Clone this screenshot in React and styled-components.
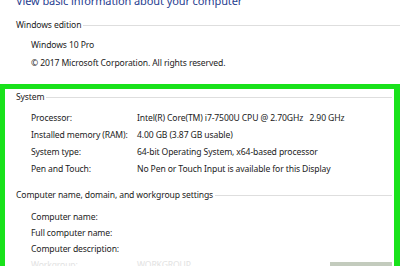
import React from 'react';
import styled, { createGlobalStyle } from 'styled-components';

const GlobalStyle = createGlobalStyle`
  html, body {
    margin: 0;
    padding: 0;
    background: #ffffff;
  }
`;

const Page = styled.div`
  width: 400px;
  height: 266px;
  overflow: hidden;
  background: #ffffff;
  font-family: "Noto Sans", "Open Sans", sans-serif;
  color: #1b1b1b;
  font-size: 8.6px;
  letter-spacing: -0.12px;
`;

const Title = styled.div`
  margin-top: -4px;
  padding-left: 16px;
  font-size: 11px;
  line-height: 10px;
  letter-spacing: -0.1px;
  color: #1f3d8f;
  white-space: nowrap;
`;

const Section = styled.div`
  padding-top: ${p => p.$top || 0}px;
`;

const SectionHeader = styled.div`
  display: flex;
  align-items: center;
  gap: 2px;
  padding-left: ${p => p.$indent || 16}px;
  line-height: 17px;
  height: 17px;
  white-space: nowrap;

  &::after {
    content: '';
    flex: 1;
    height: 1px;
    background: #dedede;
  }
`;

const Item = styled.div`
  padding-left: 31px;
  line-height: 18px;
  height: 18px;
  white-space: nowrap;
`;

const HighlightBox = styled.div`
  margin-top: 12px;
  border: solid #19e21b;
  border-width: 5px 6px 0 5px;
  padding-right: 2px;
`;

const Rows = styled.div`
  margin-top: ${p => p.$top || 0}px;
`;

const InfoRow = styled.div`
  display: grid;
  grid-template-columns: 106px 1fr auto;
  padding-left: 26px;
  height: ${p => p.$h || 17}px;
  line-height: ${p => p.$h || 17}px;
  white-space: nowrap;
  color: ${p => (p.$faint ? '#e2e2e2' : 'inherit')};
`;

const Label = styled.span``;

const Value = styled.span`
  white-space: pre;
`;

const ChangeButton = styled.span`
  margin-top: 5px;
  width: 62px;
  height: 20px;
  background: #c3cbbd;
`;

const systemRows = [
  ['Processor:', 'Intel(R) Core(TM) i7-7500U CPU @ 2.70GHz   2.90 GHz'],
  ['Installed memory (RAM):', '4.00 GB (3.87 GB usable)'],
  ['System type:', '64-bit Operating System, x64-based processor'],
  ['Pen and Touch:', 'No Pen or Touch Input is available for this Display'],
];

const nameRows = [
  ['Computer name:', ''],
  ['Full computer name:', ''],
  ['Computer description:', ''],
];

export default function App() {
  return (
    <Page>
      <GlobalStyle />
      <Title>View basic information about your computer</Title>

      <Section $top={11}>
        <SectionHeader>Windows edition</SectionHeader>
        <Rows $top={2}>
          <Item>Windows 10 Pro</Item>
          <Item>© 2017 Microsoft Corporation. All rights reserved.</Item>
        </Rows>
      </Section>

      <HighlightBox>
        <SectionHeader $indent={11}>System</SectionHeader>
        <Rows $top={4}>
          {systemRows.map(([label, value]) => (
            <InfoRow key={label}>
              <Label>{label}</Label>
              <Value>{value}</Value>
            </InfoRow>
          ))}
        </Rows>

        <Section $top={9}>
          <SectionHeader $indent={11}>Computer name, domain, and workgroup settings</SectionHeader>
          <Rows $top={5}>
            {nameRows.map(([label, value]) => (
              <InfoRow key={label} $h={16}>
                <Label>{label}</Label>
                <Value>{value}</Value>
              </InfoRow>
            ))}
            <InfoRow $h={16} $faint>
              <Label>Workgroup:</Label>
              <Value>WORKGROUP</Value>
              <ChangeButton />
            </InfoRow>
          </Rows>
        </Section>
      </HighlightBox>
    </Page>
  );
}
